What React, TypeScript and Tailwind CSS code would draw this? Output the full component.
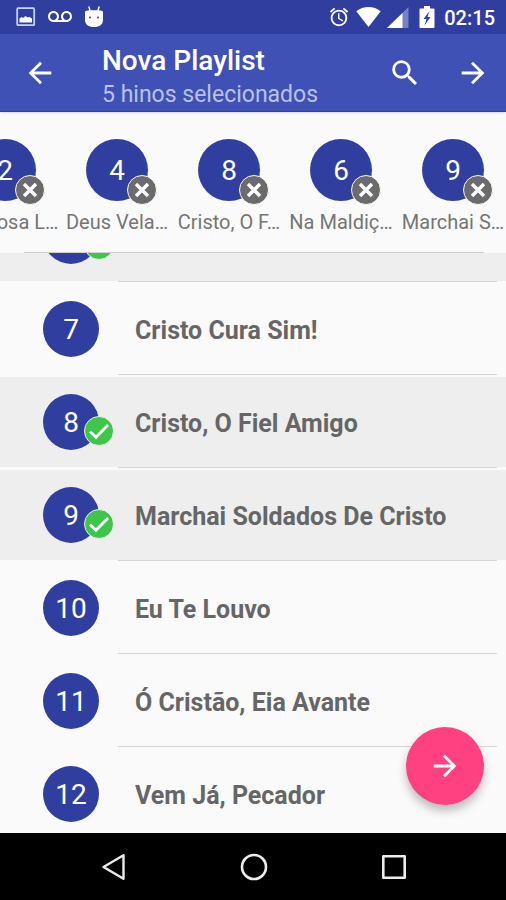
import { useState } from 'react'
import { MdAccessAlarm, MdArrowBack, MdArrowForward, MdSearch, MdVoicemail } from 'react-icons/md'

type Hymn = { number: number; title: string }

const HYMNS: Hymn[] = [
  { number: 6, title: 'Na Maldição Da Cruz' },
  { number: 7, title: 'Cristo Cura Sim!' },
  { number: 8, title: 'Cristo, O Fiel Amigo' },
  { number: 9, title: 'Marchai Soldados De Cristo' },
  { number: 10, title: 'Eu Te Louvo' },
  { number: 11, title: 'Ó Cristão, Eia Avante' },
  { number: 12, title: 'Vem Já, Pecador' },
]

const INITIAL_SELECTION = [
  { number: 2, label: 'Saudosa L…' },
  { number: 4, label: 'Deus Vela…' },
  { number: 8, label: 'Cristo, O F…' },
  { number: 6, label: 'Na Maldiç…' },
  { number: 9, label: 'Marchai S…' },
]

// Chip captions only have room for about ten characters
const shorten = (title: string) => (title.length > 10 ? `${title.slice(0, 9)}…` : title)

function StatusBar() {
  return (
    <div className="flex h-[34px] shrink-0 items-center justify-between bg-[#303f9f] pl-4 pr-[11px] text-white">
      <div className="flex items-center gap-3">
        {/* Screenshot notification */}
        <svg width="20" height="20" viewBox="0 0 20 20" className="text-indigo-200" aria-hidden="true">
          <rect x="1.2" y="1.2" width="17" height="17" rx="1" fill="none" stroke="currentColor" strokeWidth="1.8" />
          <path d="M3.500 15.500v-4l2.200-1.500 1.300 1 2.500-2 2 1.500 1.500-.8 3 1.800v4z" fill="white" />
        </svg>
        <MdVoicemail size={24} />
        {/* Debug bridge head */}
        <svg width="20" height="22" viewBox="0 0 20 22" aria-hidden="true">
          <path d="M5 1l1.400 5M15 1l-1.400 5" stroke="white" strokeWidth="1.500" strokeLinecap="round" />
          <path d="M1 5.500C3.500 4 7 4.300 10 4.300s6.500-.3 9 1.200V14c0 4.500-3.500 7-9 7s-9-2.500-9-7z" fill="white" />
          <circle cx="6" cy="11.500" r="1" fill="#303f9f" />
          <circle cx="14" cy="11.500" r="1" fill="#303f9f" />
        </svg>
      </div>
      <div className="flex items-center gap-1.5">
        <MdAccessAlarm size={22} />
        <svg width="25" height="20" viewBox="0 0 25 20" aria-hidden="true">
          <path d="M.3 4.300C3.700 1.500 8 0 12.500 0s8.800 1.500 12.200 4.300L12.500 20z" fill="white" />
        </svg>
        <svg width="25" height="21" viewBox="0 0 25 21" aria-hidden="true">
          <path d="M21.500 0v21H0z" fill="white" opacity=".35" />
          <path d="M15.500 6v15H0z" fill="white" />
        </svg>
        <svg width="20" height="22" viewBox="0 0 20 22" aria-hidden="true">
          <path d="M6 0h6v2.500h3.500a1 1 0 0 1 1 1V21a1 1 0 0 1-1 1h-13a1 1 0 0 1-1-1V3.500a1 1 0 0 1 1-1H6z" fill="white" />
          <path d="M11.500 5L5.500 13h3l-2 6.500 6-8.500h-3z" fill="#303f9f" />
        </svg>
        <span className="pt-0.5 text-xl font-medium">02:15</span>
      </div>
    </div>
  )
}

function AppBar({ count }: { count: number }) {
  return (
    <header className="z-10 flex h-[78px] shrink-0 items-center border-b border-[#303f9f] bg-[#3f51b5] pl-[23px] pr-4 text-white shadow-sm">
      <button type="button" aria-label="Voltar">
        <MdArrowBack size={34} />
      </button>
      <div className="ml-[45px] min-w-0 flex-1 pt-2">
        <h1 className="truncate text-[28px] font-medium leading-9">Nova Playlist</h1>
        <p className="truncate text-[23px] leading-8 text-[#b9c1ea]">{count} hinos selecionados</p>
      </div>
      <div className="flex gap-[34px]">
        <button type="button" aria-label="Buscar">
          <MdSearch size={34} />
        </button>
        <button type="button" aria-label="Continuar">
          <MdArrowForward size={34} />
        </button>
      </div>
    </header>
  )
}

function NavBar() {
  return (
    <nav className="flex h-[67px] shrink-0 items-center justify-center gap-28 bg-black pl-0.5 text-[#ececec]">
      <button type="button" aria-label="Sistema: voltar">
        <svg width="28" height="28" viewBox="0 0 28 28" fill="none" stroke="currentColor" strokeWidth="2.400" strokeLinejoin="round">
          <path d="M23.500 2.200v23.600L3.500 14z" />
        </svg>
      </button>
      <button type="button" aria-label="Sistema: início">
        <svg width="28" height="28" viewBox="0 0 28 28" fill="none" stroke="currentColor" strokeWidth="2.600">
          <circle cx="14" cy="14" r="12" />
        </svg>
      </button>
      <button type="button" aria-label="Sistema: recentes">
        <svg width="28" height="28" viewBox="0 0 28 28" fill="none" stroke="currentColor" strokeWidth="2.600" strokeLinejoin="round">
          <rect x="3.300" y="3.300" width="21.400" height="21.400" />
        </svg>
      </button>
    </nav>
  )
}

export default function App() {
  const [selection, setSelection] = useState(INITIAL_SELECTION)
  const isSelected = (n: number) => selection.some((s) => s.number === n)
  const remove = (n: number) => setSelection(selection.filter((s) => s.number !== n))
  const toggle = (hymn: Hymn) => {
    if (isSelected(hymn.number)) remove(hymn.number)
    else setSelection([...selection, { number: hymn.number, label: shorten(hymn.title) }])
  }

  return (
    <div className="flex h-screen flex-col overflow-hidden bg-[#fafafa] font-[Roboto,sans-serif]">
      <StatusBar />
      <AppBar count={selection.length} />

      {/* Selected hymns, kept scrolled to the newest one */}
      <ul className="flex shrink-0 justify-end gap-2 overflow-hidden pb-4 pr-px pt-[27px]">
        {selection.map((item) => (
          <li key={item.number} className="flex w-[104px] shrink-0 flex-col items-center">
            <div className="relative flex size-[62px] items-center justify-center rounded-full bg-[#303f9f] pt-0.5 text-[28px] text-white">
              {item.number}
              <button
                type="button"
                aria-label={`Remover hino ${item.number}`}
                onClick={() => remove(item.number)}
                className="absolute -bottom-1 -right-[9px] flex size-[30px] items-center justify-center rounded-full border border-[#fafafa] bg-[#6b6b6b]"
              >
                <svg width="16" height="16" viewBox="0 0 16 16" stroke="white" strokeWidth="3.400">
                  <path d="M2 2l12 12M14 2l-12 12" />
                </svg>
              </button>
            </div>
            <span className="mt-[7px] whitespace-nowrap text-xl leading-7 text-[#757575]">{item.label}</span>
          </li>
        ))}
      </ul>
      <div className="ml-6 mr-[22px] h-px shrink-0 bg-[#d0d0d0]" />

      <main className="relative min-h-0 flex-1 overflow-hidden">
        <ul className="-mt-[62px]">
          {HYMNS.map((hymn) => (
            <li key={hymn.number} className="pb-0.5">
              <button
                type="button"
                aria-pressed={isSelected(hymn.number)}
                onClick={() => toggle(hymn)}
                className={`flex h-[90px] w-full items-center gap-9 pl-[43px] pr-4 text-left ${isSelected(hymn.number) ? 'bg-[#eeeeee]' : ''}`}
              >
                <span className="relative flex size-14 shrink-0 items-center justify-center rounded-full bg-[#303f9f] pt-0.5 text-[28px] text-white">
                  {hymn.number}
                  {isSelected(hymn.number) && (
                    <span className="absolute -right-[15px] bottom-1 flex size-[30px] items-center justify-center rounded-full border border-[#eeeeee] bg-[#3ec64a]">
                      <svg width="22" height="20" viewBox="0 0 22 20" fill="none" stroke="white" strokeWidth="2.800">
                        <path d="M2 10.500l6 5.700L20 4" />
                      </svg>
                    </span>
                  )}
                </span>
                <span className="truncate pt-1 text-[25px] font-bold text-[#666666]">{hymn.title}</span>
              </button>
              <div className="ml-[118px] mr-[9px] h-px bg-[#d6d6d6]" />
            </li>
          ))}
        </ul>
        <button
          type="button"
          aria-label="Avançar"
          className="absolute bottom-7 right-[22px] flex size-[78px] items-center justify-center rounded-full bg-[#ff4081] text-white shadow-[0_6px_10px_rgba(0,0,0,0.25)]"
        >
          <MdArrowForward size={34} />
        </button>
      </main>

      <NavBar />
    </div>
  )
}
